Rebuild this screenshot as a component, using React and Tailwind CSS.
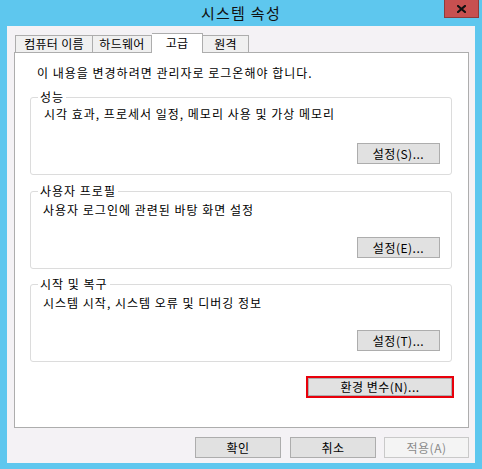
import React from "react";

const font = "font-['Noto_Sans_CJK_KR','Noto_Sans',sans-serif]";

function Btn({ children, className = "", disabled = false }) {
  return (
    <div
      className={`flex items-center justify-center h-[21px] border text-[12px] leading-none tracking-[0.5px] ${
        disabled
          ? "bg-[#f4f4f4] border-[#c9c9c9] text-[#8a8a8a]"
          : "bg-[#e1e1e1] border-[#adadad] text-black"
      } ${className}`}
    >
      {children}
    </div>
  );
}

function Group({ label, text, btn, pt, pl, className = "" }) {
  return (
    <div
      className={`relative h-[78px] border border-[#dcdcdc] rounded-[3px] flex flex-col ${className}`}
    >
      <div className="absolute left-[7px] top-[-9px] px-[2px] bg-white text-[12px] leading-[16px] tracking-[1px]">
        {label}
      </div>
      <div className={`text-[12px] leading-[16px] tracking-[1px] ${pt} ${pl}`}>{text}</div>
      <Btn className="mt-auto mb-[10px] mr-[11px] self-end w-[83px]">{btn}</Btn>
    </div>
  );
}

export default function App() {
  return (
    <div className={`w-[482px] h-[469px] bg-[#5ec7ee] flex flex-col ${font} text-black`}>
      <div className="relative h-[26px] flex items-center justify-center">
        <span className="text-[15px] leading-none text-[#111] tracking-[1.3px] mb-[1px]">시스템 속성</span>
        <div className="absolute left-[444px] top-0 w-[35px] h-[18px] bg-[#c75050] border border-[#8e3b3b] border-t-0 flex items-center justify-center">
          <svg width="9" height="8" viewBox="0 0 9 8">
            <path d="M1 1 L8 7 M8 1 L1 7" stroke="#111" strokeWidth="2.2" strokeLinecap="square" />
          </svg>
        </div>
      </div>
      <div className="ml-[7px] w-[468px] h-[437px] bg-[#f4f2f5] pt-[7px] pl-[7px] pr-[6px] flex flex-col">
        <div className="h-[19px] flex items-end text-[12px] leading-none tracking-[0.3px]">
          <div className="w-[78px] h-[17px] border border-b-0 border-[#adadad] bg-[#f0f0f0] flex items-center justify-center ml-[1px]">
            컴퓨터 이름
          </div>
          <div className="w-[59px] h-[17px] border border-b-0 border-l-0 border-[#adadad] bg-[#f0f0f0] flex items-center justify-center">
            하드웨어
          </div>
          <div className="relative z-10 w-[51px] h-[20px] mb-[-1px] border border-b-0 border-l-0 border-[#adadad] bg-white flex items-start justify-center pt-[3px]">
            고급
          </div>
          <div className="w-[46px] h-[17px] border border-b-0 border-l-0 border-[#adadad] bg-[#f0f0f0] flex items-center justify-center">
            원격
          </div>
        </div>
        <div className="h-[376px] bg-white border border-[#adadad] flex flex-col">
          <div className="mt-[12px] pl-[22px] text-[12px] leading-[16px] tracking-[1px]">
            이 내용을 변경하려면 관리자로 로그온해야 합니다.
          </div>
          <div className="mx-[15px] mr-[16px] mt-[16px] flex flex-col">
            <Group
              label="성능"
              text="시각 효과, 프로세서 일정, 메모리 사용 및 가상 메모리"
              btn="설정(S)..."
              pt="pt-[8px]"
              pl="pl-[13px]"
            />
            <Group
              label="사용자 프로필"
              text="사용자 로그인에 관련된 바탕 화면 설정"
              btn="설정(E)..."
              pt="pt-[10px]"
              pl="pl-[12px]"
              className="mt-[16px]"
            />
            <Group
              label="시작 및 복구"
              text="시스템 시작, 시스템 오류 및 디버깅 정보"
              btn="설정(T)..."
              pt="pt-[10px]"
              pl="pl-[12px]"
              className="mt-[15px]"
            />
          </div>
          <div className="self-end mr-[14px] mt-[14px] w-[148px] h-[22px] border-2 border-[#e8000b] flex">
            <Btn className="w-full h-full">환경 변수(N)...</Btn>
          </div>
        </div>
        <div className="mt-[9px] flex justify-end">
          <Btn className="w-[86px]">확인</Btn>
          <Btn className="w-[86px] ml-[9px]">취소</Btn>
          <Btn className="w-[85px] ml-[8px]" disabled>
            적용(A)
          </Btn>
        </div>
      </div>
    </div>
  );
}
